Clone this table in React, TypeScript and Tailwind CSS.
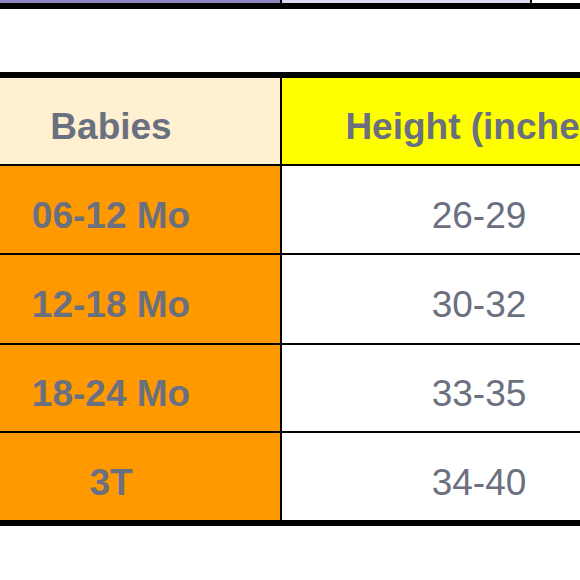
const rows = [
  { age: "06-12 Mo", height: "26-29", h: "h-[87px]" },
  { age: "12-18 Mo", height: "30-32", h: "h-[88px]" },
  { age: "18-24 Mo", height: "33-35", h: "h-[86px]" },
  { age: "3T", height: "34-40", h: "h-[87px]" },
];

export default function App() {
  return (
    <div className="w-[580px] h-[580px] overflow-hidden bg-white font-['Liberation_Sans',Arial,sans-serif] text-[#6b7080]">
      {/* tail of the table above */}
      <div className="flex h-[3px]">
        <div className="w-[280px] bg-[#8c84c4]" />
        <div className="w-[2px] bg-black" />
        <div className="w-[248px] bg-[#ddd9f0]" />
        <div className="w-[2px] bg-black" />
        <div className="flex-1 bg-white" />
      </div>
      <div className="h-[6px] bg-black" />

      <div className="h-[63px]" />

      {/* size table */}
      <div className="ml-[-58px] w-[734px] border-y-[6px] border-black">
        <div className="flex h-[86px]">
          <div className="w-[338px] flex items-center justify-center pt-[12px] bg-[#fff0d2] text-[37px] font-bold">
            Babies
          </div>
          <div className="w-[2px] bg-black" />
          <div className="flex-1 flex items-center justify-center pt-[12px] bg-[#ffff00] text-[37px] font-bold">
            Height (inches)
          </div>
        </div>
        {rows.map((r) => (
          <div key={r.age}>
            <div className="h-[2px] bg-black" />
            <div className={`flex ${r.h}`}>
              <div className="w-[338px] flex items-center justify-center pt-[12px] bg-[#ff9900] text-[37px] font-bold">
                {r.age}
              </div>
              <div className="w-[2px] bg-black" />
              <div className="flex-1 flex items-center justify-center pt-[12px] bg-white text-[37px]">
                {r.height}
              </div>
            </div>
          </div>
        ))}
      </div>
    </div>
  );
}
